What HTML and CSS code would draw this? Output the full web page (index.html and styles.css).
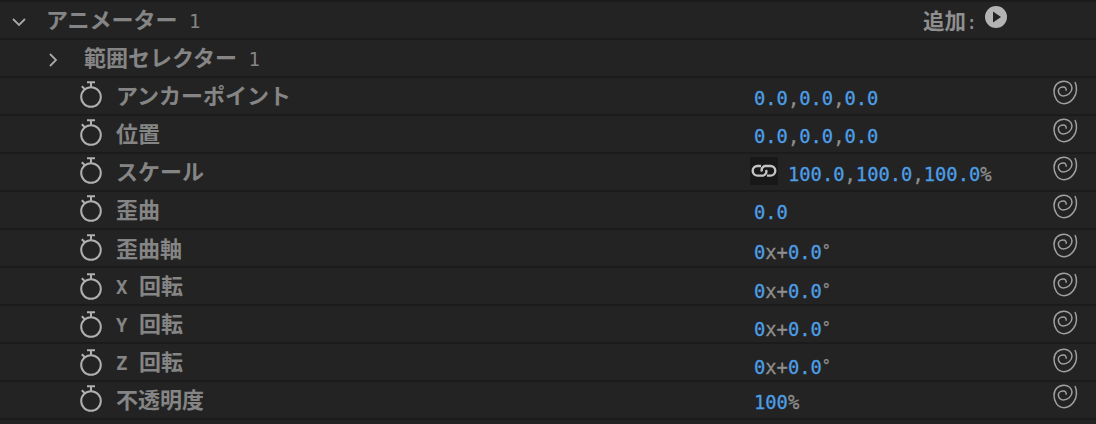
FILE: index.html
```html
<!DOCTYPE html>
<html lang="ja">

<head>
    <meta charset="UTF-8">
    <title>アニメーター 1</title>
    <link rel="stylesheet" href="styles.css">
</head>

<body>
    <svg class="defs">
        <defs>
            <symbol id="watch" viewBox="0 0 24 30">
                <circle cx="12" cy="18" r="9.8" />
                <path d="M8 3.2H16M12 3.2V8M2.8 7.2L5.6 10" />
            </symbol>
            <symbol id="spiral" viewBox="0 0 150 120">
                <path d="M105 30C112 45 111 65 101 78C93 89 83 95 72 95C52 95 42 75 42 58C42 40 55 28 72 28C85 28 96 37 96 48C96 62 82 72 70 72C60 72 55 63 55 56C55 50 62 45 70 45C76 45 80 50 78 56" />
            </symbol>
        </defs>
    </svg>

    <div class="panel">
        <div class="row head">
            <div class="name">
                <svg class="chevron" viewBox="0 0 14 14"><path d="M1 4L7 10L13 4" /></svg>
                <span class="label">アニメーター<span class="mono"> 1</span></span>
            </div>
            <div class="add">
                <span>追加<span class="mono">:</span></span>
                <svg class="play" viewBox="0 0 22 22"><circle cx="11" cy="11" r="11" /><path d="M8 5.5L16 11L8 16.5Z" /></svg>
            </div>
        </div>

        <div class="row selector">
            <div class="name">
                <svg class="chevron" viewBox="0 0 14 14"><path d="M4 1L10 7L4 13" /></svg>
                <span class="label">範囲セレクター<span class="mono"> 1</span></span>
            </div>
        </div>

        <div class="row prop">
            <div class="name"><svg class="watch"><use href="#watch" /></svg><span class="label">アンカーポイント</span></div>
            <div class="value"><b>0.0</b>,<b>0.0</b>,<b>0.0</b></div>
            <svg class="spiral"><use href="#spiral" /></svg>
        </div>
        <div class="row prop">
            <div class="name"><svg class="watch"><use href="#watch" /></svg><span class="label">位置</span></div>
            <div class="value"><b>0.0</b>,<b>0.0</b>,<b>0.0</b></div>
            <svg class="spiral"><use href="#spiral" /></svg>
        </div>
        <div class="row prop">
            <div class="name"><svg class="watch"><use href="#watch" /></svg><span class="label">スケール</span></div>
            <div class="value scale">
                <span class="link">
                    <svg viewBox="0 0 28 28"><path d="M11 9H7.5A4.8 4.8 0 0 0 7.5 18.6H13A4 4 0 0 0 16 13M17 18.6H20.5A4.8 4.8 0 0 0 20.5 9H15A4 4 0 0 0 12 14.6" /></svg>
                </span>
                <span><b>100.0</b>,<b>100.0</b>,<b>100.0</b>%</span>
            </div>
            <svg class="spiral"><use href="#spiral" /></svg>
        </div>
        <div class="row prop">
            <div class="name"><svg class="watch"><use href="#watch" /></svg><span class="label">歪曲</span></div>
            <div class="value"><b>0.0</b></div>
            <svg class="spiral"><use href="#spiral" /></svg>
        </div>
        <div class="row prop">
            <div class="name"><svg class="watch"><use href="#watch" /></svg><span class="label">歪曲軸</span></div>
            <div class="value"><b>0</b>x+<b>0.0</b><i>°</i></div>
            <svg class="spiral"><use href="#spiral" /></svg>
        </div>
        <div class="row prop">
            <div class="name"><svg class="watch"><use href="#watch" /></svg><span class="label"><span class="mono bold">X </span>回転</span></div>
            <div class="value"><b>0</b>x+<b>0.0</b><i>°</i></div>
            <svg class="spiral"><use href="#spiral" /></svg>
        </div>
        <div class="row prop">
            <div class="name"><svg class="watch"><use href="#watch" /></svg><span class="label"><span class="mono bold">Y </span>回転</span></div>
            <div class="value"><b>0</b>x+<b>0.0</b><i>°</i></div>
            <svg class="spiral"><use href="#spiral" /></svg>
        </div>
        <div class="row prop">
            <div class="name"><svg class="watch"><use href="#watch" /></svg><span class="label"><span class="mono bold">Z </span>回転</span></div>
            <div class="value"><b>0</b>x+<b>0.0</b><i>°</i></div>
            <svg class="spiral"><use href="#spiral" /></svg>
        </div>
        <div class="row prop">
            <div class="name"><svg class="watch"><use href="#watch" /></svg><span class="label">不透明度</span></div>
            <div class="value"><b>100</b>%</div>
            <svg class="spiral"><use href="#spiral" /></svg>
        </div>
    </div>
</body>

</html>
```

FILE: styles.css
```css
html, body {
    margin: 0;
    padding: 0;
    height: 100%;
    overflow: hidden;
    background-color: #232323;
}

.defs {
    display: none;
}

.panel {
    border-top: 2px solid #1b1b1b;
    font-family: "DejaVu Sans Mono", "Noto Sans CJK JP", monospace;
    font-size: 18.8px;
    color: #8f8f8f;
}

.row {
    display: grid;
    grid-template-columns: 750px 303px 43px;
    align-items: center;
    height: 36px;
    border-bottom: 2px solid #1b1b1b;
}

.name {
    display: flex;
    align-items: center;
}

.label {
    font-family: "Noto Sans CJK JP", sans-serif;
    font-size: 22px;
    line-height: 32px;
    padding-bottom: 4px;
    font-weight: 700;
    color: #858585;
    white-space: pre;
}

.mono {
    font-family: "DejaVu Sans Mono", monospace;
    font-size: 19px;
    font-weight: normal;
}

.mono.bold {
    font-weight: 700;
}

.chevron {
    width: 14px;
    height: 14px;
    fill: none;
    stroke: #a8a8a8;
    stroke-width: 1.8;
}

.head .name {
    padding-left: 12px;
}

.head .chevron {
    margin-right: 20px;
}

.selector .name {
    padding-left: 46px;
}

.selector .chevron {
    margin-right: 24px;
}

.add {
    grid-column: 2 / 4;
    display: flex;
    align-items: flex-start;
    gap: 8px;
    height: 36px;
    padding-left: 173px;
    font-family: "Noto Sans CJK JP", sans-serif;
    font-size: 21.5px;
    line-height: 32px;
    font-weight: 700;
    color: #8f8f8f;
}

.play {
    width: 22px;
    height: 22px;
    margin-top: 2px;
    fill: #b4b4b4;
}

.play path {
    fill: #232323;
}

.prop .name {
    padding-left: 79px;
}

.watch {
    width: 24px;
    height: 30px;
    margin-right: 13px;
    margin-top: -4px;
    fill: none;
    stroke: #b0b0b0;
    stroke-width: 2;
}

.value {
    padding-left: 4px;
    padding-top: 6px;
    line-height: 30px;
    white-space: pre;
    -webkit-text-stroke: 0.3px;
}

.value b {
    font-weight: normal;
    color: #4d9ee6;
}

.value i {
    font-style: normal;
    font-size: 15px;
    vertical-align: 3px;
}

.scale {
    display: flex;
    align-items: center;
    gap: 10px;
    padding-left: 0;
    padding-top: 0;
}

.scale span:last-child {
    padding-top: 6px;
}

.link {
    display: flex;
    width: 28px;
    height: 28px;
    margin-top: -2px;
    background-color: #181818;
}

.link svg {
    width: 28px;
    height: 28px;
    fill: none;
    stroke: #c4c4c4;
    stroke-width: 2.4;
}

.spiral {
    width: 50px;
    height: 40px;
    margin-left: -13px;
    margin-top: -8px;
    fill: none;
    stroke: #a0a0a0;
    stroke-width: 4.5;
}
```
